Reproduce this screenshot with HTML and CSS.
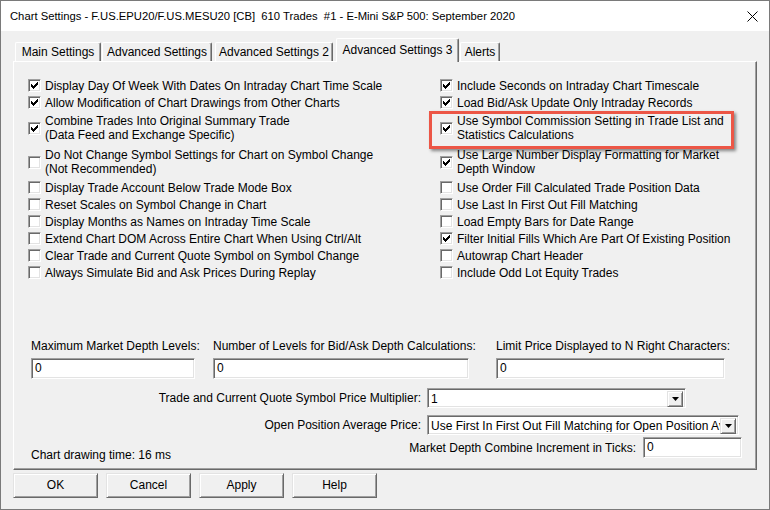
FILE: index.html
```html
<!DOCTYPE html>
<html>
<head>
<meta charset="utf-8">
<link rel="stylesheet" href="styles.css">
</head>
<body>
<div class="window">
  <div class="titlebar">
    <span class="title">Chart Settings - F.US.EPU20/F.US.MESU20 [CB]  610 Trades  #1 - E-Mini S&amp;P 500: September 2020</span>
    <svg class="close" width="11" height="11" viewBox="0 0 11 11"><path d="M0.5 0.5L10.5 10.5M10.5 0.5L0.5 10.5" stroke="#000" stroke-width="1"/></svg>
  </div>
  <div class="body">
    <div class="tabs">
      <div class="tab t1">Main Settings</div>
      <div class="tab t2">Advanced Settings</div>
      <div class="tab t3">Advanced Settings 2</div>
      <div class="tab t4 active">Advanced Settings 3</div>
      <div class="tab t5">Alerts</div>
    </div>
    <div class="panel">
      <div class="checks">
        <div class="col">
          <div class="cb"><span class="box"><svg width="7" height="7" viewBox="0 0 7 7"><path d="M0 2h1v3H0zM1 3h1v3H1zM2 4h1v3H2zM3 3h1v3H3zM4 2h1v3H4zM5 1h1v3H5zM6 0h1v3H6z" fill="#000"/></svg></span><span class="lbl">Display Day Of Week With Dates On Intraday Chart Time Scale</span></div>
          <div class="cb"><span class="box"><svg width="7" height="7" viewBox="0 0 7 7"><path d="M0 2h1v3H0zM1 3h1v3H1zM2 4h1v3H2zM3 3h1v3H3zM4 2h1v3H4zM5 1h1v3H5zM6 0h1v3H6z" fill="#000"/></svg></span><span class="lbl">Allow Modification of Chart Drawings from Other Charts</span></div>
          <div class="cb two"><span class="box"><svg width="7" height="7" viewBox="0 0 7 7"><path d="M0 2h1v3H0zM1 3h1v3H1zM2 4h1v3H2zM3 3h1v3H3zM4 2h1v3H4zM5 1h1v3H5zM6 0h1v3H6z" fill="#000"/></svg></span><span class="lbl">Combine Trades Into Original Summary Trade<br>(Data Feed and Exchange Specific)</span></div>
          <div class="cb two"><span class="box"></span><span class="lbl">Do Not Change Symbol Settings for Chart on Symbol Change<br>(Not Recommended)</span></div>
          <div class="cb"><span class="box"></span><span class="lbl">Display Trade Account Below Trade Mode Box</span></div>
          <div class="cb"><span class="box"></span><span class="lbl">Reset Scales on Symbol Change in Chart</span></div>
          <div class="cb"><span class="box"></span><span class="lbl">Display Months as Names on Intraday Time Scale</span></div>
          <div class="cb"><span class="box"></span><span class="lbl">Extend Chart DOM Across Entire Chart When Using Ctrl/Alt</span></div>
          <div class="cb"><span class="box"></span><span class="lbl">Clear Trade and Current Quote Symbol on Symbol Change</span></div>
          <div class="cb"><span class="box"></span><span class="lbl">Always Simulate Bid and Ask Prices During Replay</span></div>
        </div>
        <div class="col">
          <div class="cb"><span class="box"><svg width="7" height="7" viewBox="0 0 7 7"><path d="M0 2h1v3H0zM1 3h1v3H1zM2 4h1v3H2zM3 3h1v3H3zM4 2h1v3H4zM5 1h1v3H5zM6 0h1v3H6z" fill="#000"/></svg></span><span class="lbl">Include Seconds on Intraday Chart Timescale</span></div>
          <div class="cb"><span class="box"><svg width="7" height="7" viewBox="0 0 7 7"><path d="M0 2h1v3H0zM1 3h1v3H1zM2 4h1v3H2zM3 3h1v3H3zM4 2h1v3H4zM5 1h1v3H5zM6 0h1v3H6z" fill="#000"/></svg></span><span class="lbl">Load Bid/Ask Update Only Intraday Records</span></div>
          <div class="cb two"><span class="box"><svg width="7" height="7" viewBox="0 0 7 7"><path d="M0 2h1v3H0zM1 3h1v3H1zM2 4h1v3H2zM3 3h1v3H3zM4 2h1v3H4zM5 1h1v3H5zM6 0h1v3H6z" fill="#000"/></svg></span><span class="lbl">Use Symbol Commission Setting in Trade List and<br>Statistics Calculations</span></div>
          <div class="cb two"><span class="box"><svg width="7" height="7" viewBox="0 0 7 7"><path d="M0 2h1v3H0zM1 3h1v3H1zM2 4h1v3H2zM3 3h1v3H3zM4 2h1v3H4zM5 1h1v3H5zM6 0h1v3H6z" fill="#000"/></svg></span><span class="lbl">Use Large Number Display Formatting for Market<br>Depth Window</span></div>
          <div class="cb"><span class="box"></span><span class="lbl">Use Order Fill Calculated Trade Position Data</span></div>
          <div class="cb"><span class="box"></span><span class="lbl">Use Last In First Out Fill Matching</span></div>
          <div class="cb"><span class="box"></span><span class="lbl">Load Empty Bars for Date Range</span></div>
          <div class="cb"><span class="box"><svg width="7" height="7" viewBox="0 0 7 7"><path d="M0 2h1v3H0zM1 3h1v3H1zM2 4h1v3H2zM3 3h1v3H3zM4 2h1v3H4zM5 1h1v3H5zM6 0h1v3H6z" fill="#000"/></svg></span><span class="lbl">Filter Initial Fills Which Are Part Of Existing Position</span></div>
          <div class="cb"><span class="box"></span><span class="lbl">Autowrap Chart Header</span></div>
          <div class="cb"><span class="box"></span><span class="lbl">Include Odd Lot Equity Trades</span></div>
        </div>
      </div>

      <div class="fields">
        <div class="field f1"><span class="flabel">Maximum Market Depth Levels:</span><div class="input">0</div></div>
        <div class="field f2"><span class="flabel">Number of Levels for Bid/Ask Depth Calculations:</span><div class="input">0</div></div>
        <div class="field f3"><span class="flabel">Limit Price Displayed to N Right Characters:</span><div class="input">0</div></div>
      </div>

      <div class="lrow first">
        <span class="rlabel">Trade and Current Quote Symbol Price Multiplier:</span>
        <div class="combo c1"><span class="val">1</span><span class="dbtn"><svg width="7" height="4" viewBox="0 0 7 4"><path d="M0 0h7L3.5 4z" fill="#000"/></svg></span></div>
      </div>
      <div class="lrow second">
        <span class="rlabel">Open Position Average Price:</span>
        <div class="combo c2"><span class="val">Use First In First Out Fill Matching for Open Position Av</span><span class="dbtn"><svg width="7" height="4" viewBox="0 0 7 4"><path d="M0 0h7L3.5 4z" fill="#000"/></svg></span></div>
      </div>
      <div class="lrow third">
        <span class="cdt">Chart drawing time: 16 ms</span>
        <span class="mlabel">Market Depth Combine Increment in Ticks:</span>
        <div class="input small">0</div>
      </div>
    </div>
    <div class="buttons">
      <div class="btn">OK</div>
      <div class="btn">Cancel</div>
      <div class="btn">Apply</div>
      <div class="btn">Help</div>
    </div>
  </div>
  <div class="highlight"></div>
</div>
</body>
</html>
```
FILE: styles.css
```css
* { box-sizing: border-box; }
body {
  margin: 0;
  font-family: "Liberation Sans", Arial, sans-serif;
  font-size: 12px;
  color: #000;
  background: #fff;
}
.window {
  position: relative;
  width: 770px;
  height: 510px;
  border: 1px solid #7a7a7a;
  background: #f0f0f0;
  display: flex;
  flex-direction: column;
}
.titlebar {
  height: 30px;
  flex: none;
  background: #fff;
  display: flex;
  align-items: center;
  padding: 0 11px 0 9px;
}
.title {
  flex: 1;
  white-space: pre;
  font-size: 11.25px;
  color: #000;
}
.close { flex: none; }
.body {
  flex: 1;
  padding: 7px 12px 0 12px;
  display: flex;
  flex-direction: column;
}
.tabs {
  height: 23px;
  display: flex;
  align-items: flex-end;
  padding-left: 2px;
}
.tab {
  flex: none;
  height: 19px;
  line-height: 18px;
  text-align: center;
  border: 1px solid;
  border-color: #fff #696969 transparent #fff;
  border-bottom: none;
  border-radius: 2px 2px 0 0;
  box-shadow: inset -1px 0 #a0a0a0;
  white-space: nowrap;
}
.t1 { width: 86px; margin-right: 1px; }
.t2 { width: 110px; margin-right: 3px; }
.t3 { width: 118px; margin-right: 3px; }
.t4 { width: 123px; margin-right: 1px; }
.t5 { width: 40px; }
.tab.active {
  position: relative;
  z-index: 1;
  height: 24px;
  line-height: 22px;
  margin-bottom: -1px;
  background: #f0f0f0;
}
.panel {
  width: 744px;
  height: 409px;
  border: 1px solid;
  border-color: #fff #696969 #696969 #fff;
  box-shadow: inset -1px -1px #a0a0a0;
  padding: 15px 14px 0 14px;
  display: flex;
  flex-direction: column;
}
.checks {
  display: grid;
  grid-template-columns: 412px 1fr;
}
.cb {
  display: flex;
  align-items: center;
  height: 17px;
  white-space: nowrap;
}
.cb.two { height: 34px; }
.lbl { line-height: 14px; }
.box {
  flex: none;
  width: 13px;
  height: 13px;
  margin-right: 4px;
  background: #fff;
  border: 1px solid;
  border-color: #a0a0a0 #fff #fff #a0a0a0;
  box-shadow: inset 1px 1px #696969, inset -1px -1px #e3e3e3;
  display: flex;
  align-items: center;
  justify-content: center;
}
.box svg { display: block; }
.fields {
  display: flex;
  margin-top: 58px;
  padding-left: 3px;
}
.field {
  display: flex;
  flex-direction: column;
  white-space: nowrap;
}
.flabel { line-height: 14px; margin-bottom: 5px; }
.f1 { width: 164px; margin-right: 18px; }
.f2 { width: 256px; margin-right: 27px; }
.f3 { width: 229px; }
.input {
  height: 21px;
  background: #fff;
  border: 1px solid;
  border-color: #a0a0a0 #fff #fff #a0a0a0;
  box-shadow: inset 1px 1px #696969, inset -1px -1px #e3e3e3;
  padding-left: 3px;
  line-height: 19px;
}
.lrow {
  display: flex;
  align-items: center;
  white-space: nowrap;
}
.lrow.first { margin-top: 9px; }
.lrow.second { margin-top: 7px; }
.lrow.third { margin-top: 2px; padding-left: 3px; }
.rlabel {
  width: 393px;
  margin-right: 6px;
  text-align: right;
}
.combo {
  height: 20px;
  display: flex;
  background: #fff;
  border: 1px solid;
  border-color: #a0a0a0 #fff #fff #a0a0a0;
  box-shadow: inset 1px 1px #696969, inset -1px -1px #e3e3e3;
  padding: 2px;
}
.c1 { width: 259px; }
.c2 { width: 312px; }
.val {
  flex: 1;
  overflow: hidden;
  white-space: nowrap;
  line-height: 16px;
  padding-left: 1px;
}
.dbtn {
  flex: none;
  width: 16px;
  height: 16px;
  background: #f0f0f0;
  border: 1px solid;
  border-color: #e3e3e3 #696969 #696969 #e3e3e3;
  box-shadow: inset 1px 1px #fff, inset -1px -1px #a0a0a0;
  display: flex;
  align-items: center;
  justify-content: center;
}
.dbtn svg { display: block; }
.cdt {
  flex: 1;
  align-self: flex-end;
  line-height: 14px;
  margin-bottom: -4px;
}
.mlabel { margin-right: 7px; }
.input.small { width: 99px; }
.buttons {
  display: flex;
  gap: 8px;
  margin-top: 3px;
}
.btn {
  width: 85px;
  height: 25px;
  line-height: 23px;
  text-align: center;
  background: #f0f0f0;
  border: 1px solid;
  border-color: #e3e3e3 #696969 #696969 #e3e3e3;
  box-shadow: inset 1px 1px #fff, inset -1px -1px #a0a0a0;
}
.highlight {
  position: absolute;
  left: 428px;
  top: 110px;
  width: 305px;
  height: 38px;
  border: 3px solid #ec5646;
  box-shadow: 2px 2px 3px rgba(0, 0, 0, 0.45);
  pointer-events: none;
}
```
